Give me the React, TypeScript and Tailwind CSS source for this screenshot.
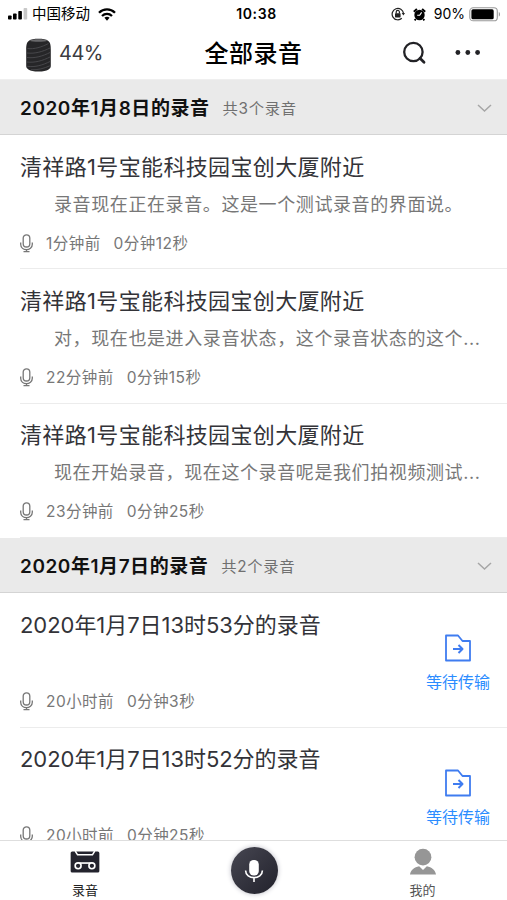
import React from 'react'

type Recording = {
  title: string
  text?: string
  ago: string
  length: string
  waiting?: boolean
}

const today: Recording[] = [
  {
    title: '清祥路1号宝能科技园宝创大厦附近',
    text: '录音现在正在录音。这是一个测试录音的界面说。',
    ago: '1分钟前',
    length: '0分钟12秒',
  },
  {
    title: '清祥路1号宝能科技园宝创大厦附近',
    text: '对，现在也是进入录音状态，这个录音状态的这个...',
    ago: '22分钟前',
    length: '0分钟15秒',
  },
  {
    title: '清祥路1号宝能科技园宝创大厦附近',
    text: '现在开始录音，现在这个录音呢是我们拍视频测试...',
    ago: '23分钟前',
    length: '0分钟25秒',
  },
]

const yesterday: Recording[] = [
  { title: '2020年1月7日13时53分的录音', ago: '20小时前', length: '0分钟3秒', waiting: true },
  { title: '2020年1月7日13时52分的录音', ago: '20小时前', length: '0分钟25秒', waiting: true },
]

function StatusBar() {
  return (
    <div className="h-7 flex items-center pl-2 pr-[6px] text-black">
      <div className="flex flex-1 items-center">
        <svg className="w-5 h-3" viewBox="0 0 20 12">
          <rect x="0" y="7.5" width="3.6" height="4" rx="0.8" />
          <rect x="5" y="5.5" width="3.6" height="6" rx="0.8" />
          <rect x="10.3" y="3" width="3.6" height="8.5" rx="0.8" />
          <rect x="15.6" y="0" width="3.6" height="11.5" rx="0.8" fill="#c8c8c8" />
        </svg>
        <span className="ml-1 text-[14.5px] leading-7">中国移动</span>
        <svg className="ml-2 w-[18px] h-[13px]" viewBox="0 0 18 13" fill="none" stroke="black" strokeWidth="2.3">
          <path d="M1 4.8C5.5 0.3 12.5 0.3 17 4.8" />
          <path d="M4 8C6.9 5.2 11.1 5.2 14 8" />
          <path d="M6.4 9.8C7.9 8.5 10.1 8.5 11.6 9.8L9 12.7Z" fill="black" stroke="none" />
        </svg>
      </div>
      <span className="pl-1 text-[14px] leading-7 font-semibold tracking-[0.6px]">10:38</span>
      <div className="flex flex-1 items-center justify-end">
        <svg className="w-3.5 h-3.5" viewBox="0 0 14 14" fill="none" stroke="#222" strokeWidth="1.2">
          <path d="M10.8 11.2A5.7 5.7 0 1 1 12.5 6.4" />
          <path d="M10.7 6H14L12.4 8.5Z" fill="#222" stroke="none" />
          <rect x="4" y="6.2" width="5.6" height="4.2" rx="0.6" fill="#222" stroke="none" />
          <path d="M5.2 6.5V5a1.6 1.6 0 0 1 3.2 0v1.5" />
        </svg>
        <svg className="ml-2 w-[13px] h-[13px]" viewBox="0 0 13 13">
          <circle cx="6.5" cy="7" r="5.2" />
          <path d="M0.8 3.8L3.9 1M12.2 3.8L9.1 1M2.8 11L1.6 12.4M10.2 11L11.4 12.4" stroke="black" strokeWidth="1.9" />
          <path d="M8.6 4.4L6.7 7.3H4.2" fill="none" stroke="white" strokeWidth="1.1" />
        </svg>
        <span className="ml-2 text-[14px] leading-7">90%</span>
        <svg className="ml-1 w-8 h-[15px]" viewBox="0 0 32 15">
          <rect x="0.8" y="0.8" width="27.5" height="13" rx="3.4" fill="white" stroke="#999" strokeWidth="1.1" />
          <rect x="2.4" y="2.3" width="22.3" height="10" rx="1.6" />
          <path d="M29.8 5V9.6C31.4 9 31.4 5.6 29.8 5Z" fill="#999" />
        </svg>
      </div>
    </div>
  )
}

function NavBar() {
  return (
    <header className="h-[52px] flex items-center pl-[26px] pr-[26px] border-b border-[#efefef]">
      <div className="flex flex-1 items-center">
        <svg className="w-[25px] h-[34px] mt-0.5" viewBox="0 0 25 34">
          <path d="M3 2.8C6 0.2 19 0.2 22 2.8C24.6 4.5 24.8 8 24.8 12V28C24.8 30.5 22 33.6 12.5 33.6C3 33.6 0.2 30.5 0.2 28V12C0.2 8 0.4 4.5 3 2.8Z" fill="#262628" />
          <path d="M3.4 2.8C6.5 0.6 18.5 0.6 21.6 2.8C18 4.2 7 4.2 3.4 2.8Z" fill="#6a6a6c" />
          <g fill="none" stroke="#4b4b4e" strokeWidth="0.9">
            <path d="M1.5 10.5C8 11.5 16 9 22.5 5.5" />
            <path d="M1 15C9 16 17 13.5 24 10" />
            <path d="M1 19.5C9 20.5 17 18 24 14.5" />
            <path d="M1 24C9 25 17 22.5 24 19" />
            <path d="M1.3 28.3C9 29.5 17 27 24 23.5" />
            <path d="M5 31.8C12 32 18 30.5 23.8 27.8" />
          </g>
        </svg>
        <span className="ml-2 -mt-px text-[20px] leading-7 tracking-[-0.5px] text-[#3c3c40]">44%</span>
      </div>
      <h1 className="text-[24px] leading-9 font-medium tracking-[0.5px] text-black">全部录音</h1>
      <div className="flex flex-1 items-center justify-end pb-0.5">
        <svg className="w-6 h-6" viewBox="0 0 24 24" fill="none" stroke="#222226" strokeWidth="2.3">
          <circle cx="10.4" cy="11" r="9.2" />
          <path d="M17 17.3L21 21.2" strokeWidth="2.8" strokeLinecap="round" />
        </svg>
        <svg className="ml-7 w-[26px] h-6" viewBox="0 0 26 24" fill="#222226">
          <circle cx="2.9" cy="11.5" r="2.4" />
          <circle cx="12.8" cy="11.5" r="2.4" />
          <circle cx="22.6" cy="11.5" r="2.4" />
        </svg>
      </div>
    </header>
  )
}

function SectionHeader({ title, count }: { title: string; count: string }) {
  return (
    <div className="h-[55px] shrink-0 flex items-center pt-[3px] pl-5 pr-[15px] bg-[#eaeaea] border-b border-[#d4d4d4]">
      <h2 className="text-[19px] leading-7 font-semibold tracking-[0.55px] text-[#111]">{title}</h2>
      <span className="ml-[13px] text-[15.3px] leading-7 tracking-[0.7px] text-[#707070]">{count}</span>
      <svg className="ml-auto w-[15px] h-[9px]" viewBox="0 0 15 9" fill="none" stroke="#a6a6a6" strokeWidth="1.5">
        <path d="M1 1L7.5 7L14 1" />
      </svg>
    </div>
  )
}

function MicIcon() {
  return (
    <svg className="w-[13px] h-[19px] -mt-px" viewBox="0 0 13 19" fill="none" stroke="#777" strokeWidth="1.3">
      <rect x="3.2" y="0.8" width="6.6" height="12.2" rx="3.3" />
      <path d="M0.7 8.5V10.2C0.7 17.4 12.3 17.4 12.3 10.2V8.5M6.5 15.5V17.5M3.5 17.7H9.5" />
    </svg>
  )
}

function RecordingRow({ item }: { item: Recording }) {
  return (
    <div className="h-[134.4px] shrink-0 ml-5 flex border-b border-[#ececec]">
      <div className="flex-1 flex flex-col pt-[15.5px] min-w-0">
        <h3
          className={`text-[22px] leading-8 text-[#333338] whitespace-nowrap ${
            item.waiting ? 'tracking-[-0.05px]' : 'tracking-[0.35px]'
          }`}
        >
          {item.title}
        </h3>
        <p className="h-11 pt-1.5 pl-[34px] text-[18px] leading-8 text-[#777] tracking-[0.6px] whitespace-nowrap">
          {item.text}
        </p>
        <div className="flex items-center h-[34px] text-[15.5px] leading-6 tracking-[0.45px] text-[#777]">
          <MicIcon />
          <span className="ml-[13px]">{item.ago}</span>
          <span className="ml-[13px]">{item.length}</span>
        </div>
      </div>
      {item.waiting && (
        <button className="flex flex-col items-center w-16 mr-[17px] pt-[41px] text-[#2b8cff]">
          <svg className="w-[26px] h-[28px] shrink-0" viewBox="0 0 26 28" fill="none" stroke="#3f7cf0" strokeWidth="1.8" strokeLinejoin="round">
            <path d="M1 1.5H13L17.5 7H25V26.5H1Z" />
            <path d="M8 15H17M13.5 11L17.5 15L13.5 19" strokeWidth="2" />
          </svg>
          <span className="mt-2 text-[16px] leading-6 whitespace-nowrap">等待传输</span>
        </button>
      )}
    </div>
  )
}

function TabBar() {
  return (
    <nav className="h-[60px] shrink-0 flex bg-white border-t border-[#dedede] text-[13px] leading-5">
      <div className="w-[170px] flex flex-col items-center pt-2.5 text-[#222]">
        <svg className="w-[30px] h-[23px]" viewBox="0 0 30 23">
          <rect x="0" y="0.5" width="30" height="22" rx="1.6" fill="#23232d" />
          <path d="M4.8 0L7.2 4H22.8L25.2 0" fill="none" stroke="white" strokeWidth="1.6" />
          <g fill="none" stroke="white" strokeWidth="1.7">
            <circle cx="7.8" cy="15.5" r="3.1" />
            <circle cx="22.2" cy="15.5" r="3.1" />
            <path d="M9 12.6H21" />
          </g>
        </svg>
        <span className="mt-[7px]">录音</span>
      </div>
      <div className="flex-1 flex justify-center pt-1.5">
        <button className="w-[47px] h-[47px] rounded-full bg-linear-to-br from-[#474752] to-[#22222c] shadow-[0_0_5px_#bbbbc4] flex items-center justify-center">
          <svg className="w-5 h-6" viewBox="0 0 20 24" fill="none" stroke="white" strokeWidth="1.6">
            <rect x="5.2" y="1" width="9.6" height="15.5" rx="4.5" fill="white" stroke="none" />
            <path d="M1.6 11.5C1.6 21 18.4 21 18.4 11.5M10 18.7V23" />
          </svg>
        </button>
      </div>
      <div className="w-[169px] flex flex-col items-center pt-[7px] text-[#555]">
        <svg className="w-7 h-7" viewBox="0 0 28 28" fill="#969696">
          <circle cx="14" cy="9.5" r="8.7" />
          <path d="M0.5 27.5C1.5 22.5 5 20 10 19L14 22.8L18 19C23 20 26.5 22.5 27.5 27.5Z" />
        </svg>
        <span className="mt-[5px]">我的</span>
      </div>
    </nav>
  )
}

export default function App() {
  return (
    <div className="w-[507px] h-[900px] flex flex-col overflow-hidden bg-white font-['Inter','Noto_Sans_CJK_SC',sans-serif]">
      <StatusBar />
      <NavBar />
      <main className="flex-1 min-h-0 flex flex-col overflow-hidden">
        <SectionHeader title="2020年1月8日的录音" count="共3个录音" />
        {today.map((item, i) => (
          <RecordingRow key={i} item={item} />
        ))}
        <SectionHeader title="2020年1月7日的录音" count="共2个录音" />
        {yesterday.map((item, i) => (
          <RecordingRow key={i} item={item} />
        ))}
      </main>
      <TabBar />
    </div>
  )
}
